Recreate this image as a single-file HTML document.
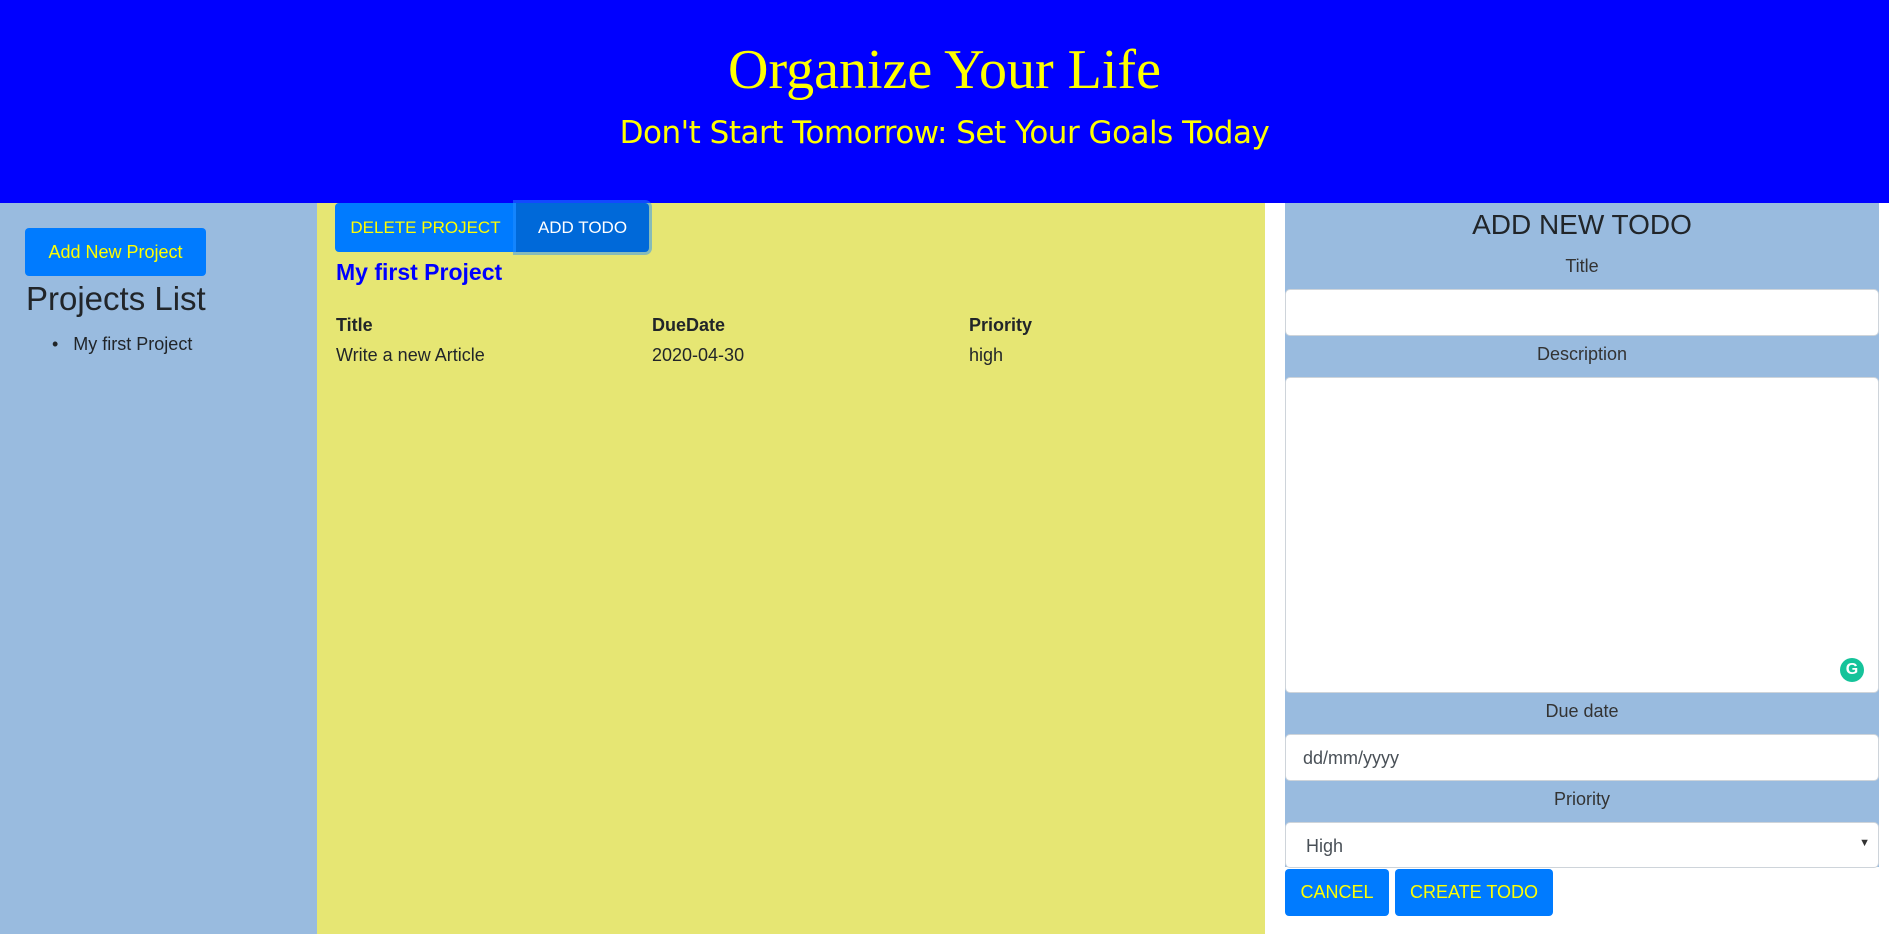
<!DOCTYPE html>
<html><head><style>
*{box-sizing:border-box;margin:0;padding:0}
body{width:1889px;height:934px;overflow:hidden;font-family:"Liberation Sans",sans-serif;font-size:18px;color:#212529;background:#fff;position:relative}
.abs{position:absolute}
header{position:absolute;left:0;top:0;width:1889px;height:203px;background:#0000ff;text-align:center;color:#ffff00}
h1{position:absolute;top:38px;width:100%;font-family:"Liberation Serif",serif;font-weight:normal;font-size:56px}
h2{position:absolute;top:115px;width:100%;font-family:"Comic Sans MS","DejaVu Sans",sans-serif;font-weight:normal;font-size:31px;letter-spacing:-0.5px}
.btn{position:absolute;background:#007bff;color:#ffff00;border-radius:4px;display:flex;align-items:center;justify-content:center;font-size:18px}
.lbl{position:absolute;left:1285px;width:594px;text-align:center;font-size:18px;color:#333}
.inp{position:absolute;left:1285px;width:594px;background:#fff;border:1px solid #ced4da;border-radius:5px}
</style></head><body>
<header><h1>Organize Your Life</h1><h2>Don't Start Tomorrow: Set Your Goals Today</h2></header>
<div class="abs" style="left:0;top:203px;width:317px;height:731px;background:#99bbdf"></div>
<div class="abs" style="left:317px;top:203px;width:948px;height:731px;background:#e6e673"></div>
<div class="abs" style="left:1285px;top:203px;width:594px;height:664px;background:#99bbdf"></div>
<div class="btn" style="left:25px;top:228px;width:181px;height:48px">Add New Project</div>
<div class="abs" style="left:26px;top:280px;font-size:33px">Projects List</div>
<div class="abs" style="left:52px;top:334px">•&nbsp;&nbsp;&nbsp;My first Project</div>
<div class="btn" style="left:335px;top:203px;width:181px;height:49px;border-radius:4px 0 0 4px;font-size:17px">DELETE PROJECT</div>
<div class="btn" style="left:516px;top:203px;width:133px;height:49px;background:#0069d9;color:#fff;box-shadow:0 0 0 3px rgba(38,143,255,.5);border-radius:0 4px 4px 0;font-size:17px">ADD TODO</div>
<div class="abs" style="left:336px;top:259px;font-size:23px;font-weight:bold;color:#0000ff">My first Project</div>
<div class="abs" style="left:336px;top:315px;font-weight:bold">Title</div>
<div class="abs" style="left:652px;top:315px;font-weight:bold">DueDate</div>
<div class="abs" style="left:969px;top:315px;font-weight:bold">Priority</div>
<div class="abs" style="left:336px;top:345px">Write a new Article</div>
<div class="abs" style="left:652px;top:345px">2020-04-30</div>
<div class="abs" style="left:969px;top:345px">high</div>
<div class="lbl" style="top:209px;font-size:28px;color:#212529">ADD NEW TODO</div>
<div class="lbl" style="top:256px">Title</div>
<div class="inp" style="top:289px;height:47px"></div>
<div class="lbl" style="top:344px">Description</div>
<div class="inp" style="top:377px;height:316px"><div class="abs" style="right:14px;bottom:10px;width:24px;height:24px;border-radius:50%;background:#15c39a;color:#fff;font-size:16px;font-weight:bold;text-align:center;line-height:24px">G</div></div>
<div class="lbl" style="top:701px">Due date</div>
<div class="inp" style="top:734px;height:47px;padding:13px 17px;color:#495057">dd/mm/yyyy</div>
<div class="lbl" style="top:789px">Priority</div>
<div class="inp" style="top:822px;height:46px;padding:13px 20px;color:#495057">High<span style="position:absolute;right:8px;top:14px;font-size:11px;color:#333">▼</span></div>
<div class="btn" style="left:1285px;top:869px;width:104px;height:47px">CANCEL</div>
<div class="btn" style="left:1395px;top:869px;width:158px;height:47px">CREATE TODO</div>
</body></html>
